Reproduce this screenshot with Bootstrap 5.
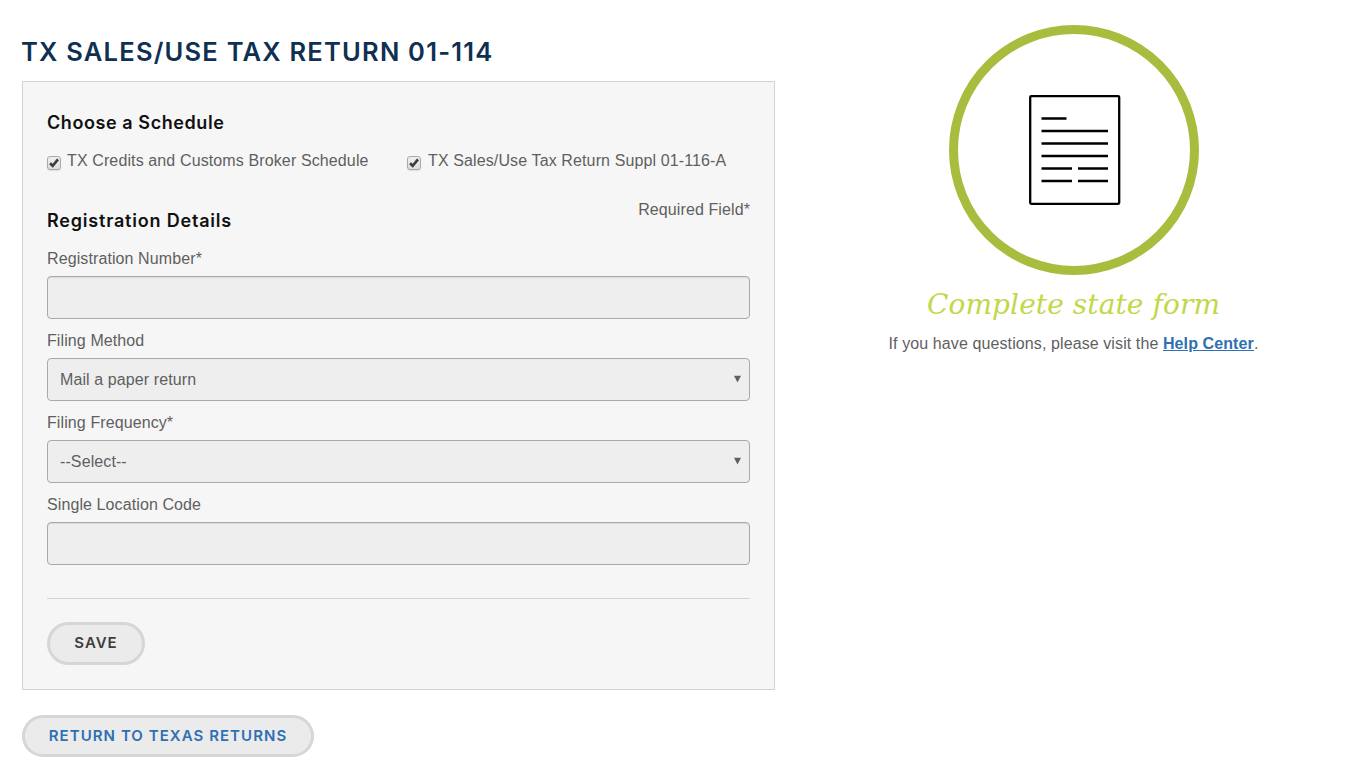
<!DOCTYPE html>
<html lang="en">
<head>
<meta charset="utf-8">
<title>TX Sales/Use Tax Return 01-114</title>
<meta name="viewport" content="width=device-width, initial-scale=1">
<link href="https://cdn.jsdelivr.net/npm/bootstrap@5.3.0/dist/css/bootstrap.min.css" rel="stylesheet">
<style>
body{font:16px/24px "Liberation Sans",Arial,sans-serif;letter-spacing:.1px;color:#5f5f5f;background:#fff}
.page{padding:25px 22px 0 22px}
.main-col{width:753px}
.title{font:600 25.5px/36px Inter,sans-serif;color:#0f3052;letter-spacing:1.22px;margin:9px 0 11px -1px;white-space:nowrap}
.panel{background:#f6f6f6;border:1px solid #d3d3d3;padding:28px 24px 24px;height:609px}
.sub{font:600 18px/26px Inter,sans-serif;color:#111;margin:0;letter-spacing:.58px}
.sub.details{padding-top:9px;letter-spacing:.8px}
.checks{margin-top:13px;height:24px}
.checks label{width:360px;white-space:nowrap;letter-spacing:.12px}
.checks label+label{width:auto}
.checks label+label .tick{margin-right:7px}
.tick{width:14px;height:14px;margin:7px 6px 0 0;border:1px solid #aaa;border-radius:3px;background:linear-gradient(#eee,#ddd);box-shadow:0 1px 1px #ddd;flex:none}
.tick svg{display:block}
.detail-head{margin:26px 0 12px}
.req{margin-top:-1px}
.field{margin-bottom:9px}
.field label{display:block;height:24px;margin-bottom:5px}
.field label{position:static;padding-top:1px;height:25px}
.form-control.box,.form-select.box{height:43px;border:1px solid #a9a9a9;border-radius:4px;background:#eee;color:#5f5f5f;padding:6px 12px;font-size:16px;line-height:24px;letter-spacing:.1px}
.form-control.box{box-shadow:inset 0 1px 1px rgba(0,0,0,.09)}
.caret{right:8px;top:17px;pointer-events:none}
.rule{border:0;border-top:1px solid #d3d3d3;opacity:1;margin:33px 0 23px}
.btn.pill{font:600 15px/22px Inter,sans-serif;border:3px solid #d6d6d6;border-radius:22px;background:#ebebeb;color:#3d3d3d;height:43px;padding:7px 0 8px;width:98px;letter-spacing:1px}
.btn.pill.back{width:292px;height:42px;margin-top:25px;color:#2f6fb3;letter-spacing:1.05px}
.help{margin-left:35px}
.help-title{font:italic 28px/36px "DejaVu Serif",serif;color:#c1d84a;margin:12px 0 9px;white-space:nowrap;letter-spacing:.1px}
.help a{color:#2f6fb3;font-weight:700}
</style>
</head>
<body>
<div class="page d-flex">
  <main class="main-col flex-shrink-0">
    <h1 class="title">TX SALES/USE TAX RETURN 01-114</h1>
    <form class="panel">
      <h2 class="sub">Choose a Schedule</h2>
      <div class="checks d-flex">
        <label class="d-flex"><span class="tick"><svg width="12" height="12" viewBox="0 0 12 12"><path d="M2 6.200 4.700 8.800 10 2.400" fill="none" stroke="#3c3c3c" stroke-width="2.600"/></svg></span>TX Credits and Customs Broker Schedule</label>
        <label class="d-flex"><span class="tick"><svg width="12" height="12" viewBox="0 0 12 12"><path d="M2 6.200 4.700 8.800 10 2.400" fill="none" stroke="#3c3c3c" stroke-width="2.600"/></svg></span>TX Sales/Use Tax Return Suppl 01-116-A</label>
      </div>
      <div class="d-flex justify-content-between detail-head">
        <h2 class="sub details">Registration Details</h2>
        <div class="req">Required Field*</div>
      </div>
      <div class="field">
        <label for="regno">Registration Number*</label>
        <input id="regno" class="form-control box" type="text">
      </div>
      <div class="field">
        <label for="method">Filing Method</label>
        <div class="position-relative">
          <select id="method" class="form-select box"><option>Mail a paper return</option></select>
          <svg class="caret position-absolute" width="9" height="8" viewBox="0 0 9 8"><path d="M1 .8h7L4.500 7.600z" fill="#5f5f5f"/></svg>
        </div>
      </div>
      <div class="field">
        <label for="freq">Filing Frequency*</label>
        <div class="position-relative">
          <select id="freq" class="form-select box"><option>--Select--</option></select>
          <svg class="caret position-absolute" width="9" height="8" viewBox="0 0 9 8"><path d="M1 .8h7L4.500 7.600z" fill="#5f5f5f"/></svg>
        </div>
      </div>
      <div class="field mb-0">
        <label for="loc">Single Location Code</label>
        <input id="loc" class="form-control box" type="text">
      </div>
      <hr class="rule">
      <button type="button" class="btn pill">SAVE</button>
    </form>
    <a href="#" class="btn pill back">RETURN TO TEXAS RETURNS</a>
  </main>
  <aside class="help flex-grow-1 text-center">
    <svg class="d-block mx-auto" width="250" height="250" viewBox="0 0 250 250" fill="none">
      <circle cx="125" cy="125" r="120.5" stroke="#a9bc3e" stroke-width="9"/>
      <g stroke="#000" stroke-width="2.300">
        <rect x="81.200" y="71.200" width="89" height="107.600" rx="1"/>
        <path d="M92.500 93.500h25M92.500 106h66.500M92.500 118.500h66.500M92.500 131h66.500M92.500 143.500h30.500m6 0h30M92.500 156h30.500m6 0h30"/>
      </g>
    </svg>
    <h3 class="help-title">Complete state form</h3>
    <div>If you have questions, please visit the <a href="#">Help Center</a>.</div>
  </aside>
</div>
<script src="https://cdn.jsdelivr.net/npm/bootstrap@5.3.0/dist/js/bootstrap.bundle.min.js"></script>
</body>
</html>
